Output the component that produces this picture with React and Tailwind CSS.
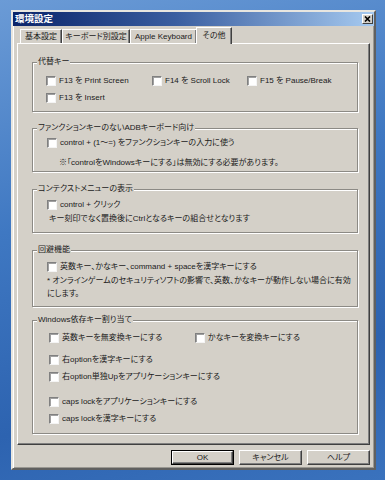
const face = "bg-[#d4d0c8]";

// チェックボックス（クラシック風のへこんだ白い箱）
function Check({ label, className = "" }) {
  return (
    <div className={`flex items-center h-[14px] ${className}`}>
      <span className="w-[10px] h-[10px] shrink-0 bg-white border border-t-[#808080] border-l-[#808080] border-r-[#f4f4f4] border-b-[#f4f4f4] shadow-[inset_1px_1px_0_#a0a0a0]" />
      <span className="ml-[3px] whitespace-nowrap">{label}</span>
    </div>
  );
}

function Group({ title, className = "", children }) {
  return (
    <div className={`relative border border-[#8c8a85] shadow-[inset_1px_1px_0_#fff,1px_1px_0_#fff] ${className}`}>
      <span className={`absolute -top-[7px] left-[4px] px-[1px] leading-[12px] whitespace-nowrap ${face}`}>{title}</span>
      {children}
    </div>
  );
}

function Tab({ label, width, active }) {
  if (active) {
    return (
      <div className={`relative z-10 -mb-[1px] -ml-[1px] h-[17px] flex items-center justify-center whitespace-nowrap border-t border-l border-white border-r border-r-[#404040] shadow-[inset_-1px_0_0_#808080] ${face} ${width}`}>
        {label}
      </div>
    );
  }
  return (
    <div className={`h-[14px] flex items-center justify-center whitespace-nowrap border-t border-l border-white border-r border-r-[#404040] shadow-[inset_-1px_0_0_#808080] ${face} ${width}`}>
      {label}
    </div>
  );
}

function Button({ label, isDefault }) {
  return (
    <div className={`w-[63px] h-[15px] ${isDefault ? "border border-black" : ""}`}>
      <div className="w-full h-full flex items-center justify-center border border-t-white border-l-white border-r-[#404040] border-b-[#404040] shadow-[inset_-1px_-1px_0_#808080]">
        {label}
      </div>
    </div>
  );
}

export default function App() {
  return (
    <div className="w-[385px] h-[480px] overflow-hidden pt-[10px] pl-[11px] bg-[linear-gradient(165deg,#6b9bd6_0%,#3f78c2_40%,#2d63b0_75%,#3a72bd_100%)] font-['Liberation_Sans','Noto_Sans_CJK_JP',sans-serif] text-[8px] text-[#1a1a1a] [font-feature-settings:'palt']">
      <div className={`w-[365px] h-[460px] flex flex-col border-2 border-t-[#e8e6e0] border-l-[#e8e6e0] border-r-[#606060] border-b-[#606060] shadow-[inset_1px_1px_0_#fff,inset_-1px_-1px_0_#9a9892] ${face}`}>
        {/* タイトルバー */}
        <div className="h-[14px] flex items-center justify-between bg-[linear-gradient(90deg,#0a246a_0%,#3a5ea0_45%,#a6caf0_100%)]">
          <span className="pl-[2px] text-white font-bold text-[9.5px] font-['Noto_Sans_CJK_JP',sans-serif] leading-none">環境設定</span>
          <span className={`mr-[1px] w-[11px] h-[10px] flex items-center justify-center border border-t-white border-l-white border-r-[#404040] border-b-[#404040] ${face}`}>
            <svg width="7" height="6" viewBox="0 0 7 6">
              <path d="M1 0.5 L6 5.5 M6 0.5 L1 5.5" stroke="#000" strokeWidth="1.6" />
            </svg>
          </span>
        </div>

        <div className="px-[4px] pt-[1px]">
          {/* タブ */}
          <div className="flex items-end pl-[3px] h-[16px]">
            <Tab label="基本設定" width="w-[42px]" />
            <Tab label="キーボード別設定" width="w-[68px]" />
            <Tab label="Apple Keyboard" width="w-[67px]" />
            <Tab label="その他" width="w-[36px]" active />
          </div>

          {/* タブパネル */}
          <div className="h-[402px] border border-t-white border-l-white border-r-[#404040] border-b-[#404040] shadow-[inset_-1px_-1px_0_#808080] pt-[18px] pl-[14px] pr-[11px] flex flex-col">
            <Group title="代替キー" className="h-[50px] pt-[11px] pl-[13px]">
              <div className="flex">
                <Check label="F13 を Print Screen" className="w-[106px]" />
                <Check label="F14 を Scroll Lock" className="w-[95px]" />
                <Check label="F15 を Pause/Break" />
              </div>
              <Check label="F13 を Insert" className="mt-[3px]" />
            </Group>

            <Group title="ファンクションキーのないADBキーボード向け" className="mt-[16px] h-[44px] pt-[7px] pl-[14px]">
              <Check label="control + (1～=) をファンクションキーの入力に使う" />
              <div className="mt-[6px] pl-[12px] leading-[14px] whitespace-nowrap">※「controlをWindowsキーにする」は無効にする必要があります。</div>
            </Group>

            <Group title="コンテクストメニューの表示" className="mt-[17px] h-[44px] pt-[8px] pl-[14px]">
              <Check label="control + クリック" />
              <div className="pl-[2px] leading-[14px] whitespace-nowrap">キー刻印でなく置換後にCtrlとなるキーの組合せとなります</div>
            </Group>

            <Group title="回避機能" className="mt-[17px] h-[57px] pt-[9px] pl-[14px]">
              <Check label="英数キー、かなキー、command + spaceを漢字キーにする" />
              <div className="leading-[13px]">
                <div className="whitespace-nowrap">* オンラインゲームのセキュリティソフトの影響で、英数、かなキーが動作しない場合に有効</div>
                <div>にします。</div>
              </div>
            </Group>

            <Group title="Windows依存キー割り当て" className="mt-[13px] h-[114px] pt-[10px] pl-[16px]">
              <div className="flex">
                <Check label="英数キーを無変換キーにする" className="w-[146px]" />
                <Check label="かなキーを変換キーにする" />
              </div>
              <Check label="右optionを漢字キーにする" className="mt-[8px]" />
              <Check label="右option単独Upをアプリケーションキーにする" className="mt-[3px]" />
              <Check label="caps lockをアプリケーションキーにする" className="mt-[11px]" />
              <Check label="caps lockを漢字キーにする" className="mt-[3px]" />
            </Group>
          </div>
        </div>

        {/* ボタン */}
        <div className="flex justify-end gap-[5px] pt-[5px] pr-[4px]">
          <Button label="OK" isDefault />
          <Button label="キャンセル" />
          <Button label="ヘルプ" />
        </div>
      </div>
    </div>
  );
}
